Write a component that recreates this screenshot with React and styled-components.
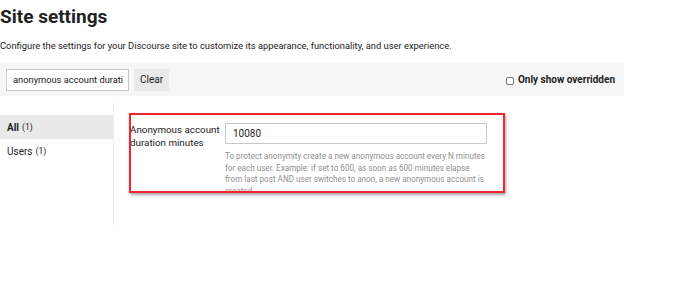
import React from "react";
import styled, { createGlobalStyle } from "styled-components";

const Global = createGlobalStyle`
  html, body { margin: 0; padding: 0; background: #fff; }
  body { font-family: Roboto, "Liberation Sans", sans-serif; color: #222; }
  * { box-sizing: border-box; }
`;

const Page = styled.div`
  width: 689px;
  height: 289px;
  overflow: hidden;
`;

const Title = styled.h1`
  margin: 0;
  padding-top: 5px;
  font-size: 19px;
  line-height: 24px;
  font-weight: 700;
  color: #222;
`;

const Subtitle = styled.p`
  margin: 11px 0 0;
  font-size: 9.35px;
  line-height: 12px;
  color: #222;
`;

const Toolbar = styled.div`
  margin-top: 11px;
  width: 624px;
  height: 33px;
  background: #f6f6f6;
  display: flex;
  align-items: center;
  padding: 0 9px 0 6px;
  gap: 5px;
`;

const SearchInput = styled.input`
  width: 123px;
  height: 22px;
  border: 1px solid #c8c8c8;
  background: #fff;
  padding: 0 5px 0 6px;
  font-family: inherit;
  font-size: 9.3px;
  color: #222;
  outline: none;
`;

const Button = styled.button`
  height: 22px;
  width: 35px;
  border: none;
  background: #e9e9e9;
  font-family: inherit;
  font-size: 10px;
  color: #222;
  padding: 0;
`;

const CheckLabel = styled.label`
  margin-left: auto;
  display: flex;
  align-items: center;
  gap: 4px;
  font-size: 10px;
  font-weight: 700;
  color: #222;
`;

const Box = styled.span`
  width: 8px;
  height: 8px;
  border: 1px solid #767676;
  border-radius: 2px;
  background: #fff;
  margin-top: 2px;
`;

const Main = styled.div`
  display: flex;
  margin-top: 7px;
`;

const Nav = styled.nav`
  width: 114px;
  height: 122px;
  border-right: 1px solid #eeeeee;
  padding-top: 12px;
  display: flex;
  flex-direction: column;
`;

const NavItem = styled.div`
  height: 24px;
  display: flex;
  align-items: center;
  padding-left: 7px;
  gap: 3px;
  font-size: 10px;
  font-weight: ${(p) => (p.$active ? 700 : 400)};
  background: ${(p) => (p.$active ? "#e9e9e9" : "transparent")};
  color: #222;
`;

const Count = styled.span`
  font-size: 8.5px;
  font-weight: 400;
`;

const Content = styled.div`
  padding: 10px 0 0 16px;
`;

const Highlight = styled.div`
  width: 376px;
  height: 80px;
  border: 2px solid #f0262b;
  box-shadow: 1px 2px 3px rgba(0, 0, 0, 0.35);
  overflow: hidden;
  display: grid;
  grid-template-columns: 94px 262px;
  padding: 8px 0 0 0;
  margin-left: -1px;
`;

const Label = styled.div`
  font-size: 9.8px;
  line-height: 13px;
  color: #222;
  margin-left: -1px;
`;

const Value = styled.div`
  display: flex;
  flex-direction: column;
`;

const ValueInput = styled.input`
  width: 262px;
  height: 21px;
  border: 1px solid #c8c8c8;
  padding: 0 7px;
  font-family: inherit;
  font-size: 10px;
  color: #222;
  outline: none;
`;

const Desc = styled.div`
  margin-top: 7px;
  font-size: 8.15px;
  line-height: 11.5px;
  color: #8f8f8f;
`;

export default function App() {
  return (
    <Page>
      <Global />
      <Title>Site settings</Title>
      <Subtitle>
        Configure the settings for your Discourse site to customize its appearance, functionality, and user experience.
      </Subtitle>
      <Toolbar>
        <SearchInput readOnly value="anonymous account duration minutes" />
        <Button>Clear</Button>
        <CheckLabel>
          <Box />
          Only show overridden
        </CheckLabel>
      </Toolbar>
      <Main>
        <Nav>
          <NavItem $active>
            All <Count>(1)</Count>
          </NavItem>
          <NavItem>
            Users <Count>(1)</Count>
          </NavItem>
        </Nav>
        <Content>
          <Highlight>
            <Label>Anonymous account duration minutes</Label>
            <Value>
              <ValueInput readOnly value="10080" />
              <Desc>
                To protect anonymity create a new anonymous account every N minutes for each user. Example: if set to 600, as soon as 600 minutes elapse from last post AND user switches to anon, a new anonymous account is created.
              </Desc>
            </Value>
          </Highlight>
        </Content>
      </Main>
    </Page>
  );
}
